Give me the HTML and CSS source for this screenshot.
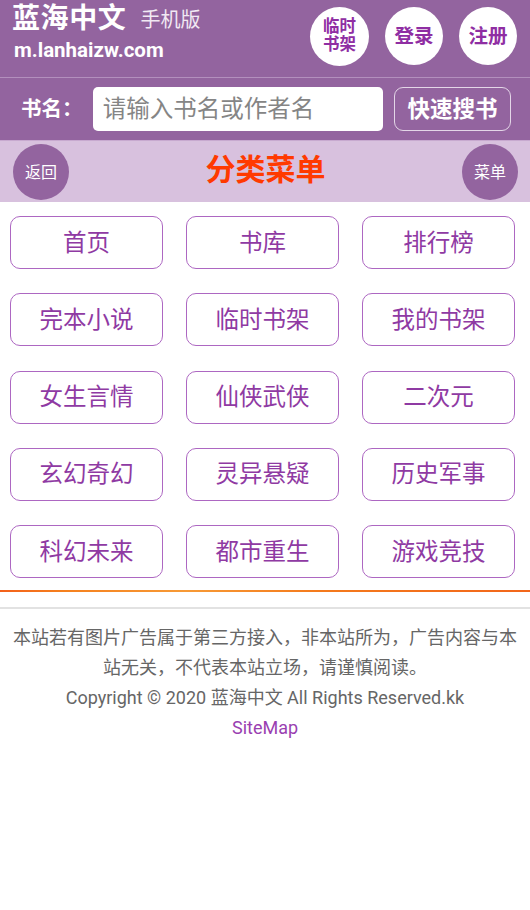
FILE: index.html
```html
<!DOCTYPE html>
<html lang="zh-CN">
<head>
<meta charset="utf-8">
<title>分类菜单 - 蓝海中文</title>
<link rel="stylesheet" href="styles.css">
</head>
<body>
<header class="top">
  <div class="brand">
    <div class="logo-line"><span class="logo">蓝海中文</span><span class="sub">手机版</span></div>
    <div class="domain">m.lanhaizw.com</div>
  </div>
  <nav class="user">
    <a class="circle small">临时<br>书架</a>
    <a class="circle">登录</a>
    <a class="circle">注册</a>
  </nav>
</header>
<form class="search">
  <label class="search-label">书名：</label>
  <input class="search-input" type="text" placeholder="请输入书名或作者名">
  <button class="search-btn" type="button">快速搜书</button>
</form>
<div class="catbar">
  <a class="round">返回</a>
  <h1 class="cat-title">分类菜单</h1>
  <a class="round">菜单</a>
</div>
<div class="grid">
  <a class="item">首页</a>
  <a class="item">书库</a>
  <a class="item">排行榜</a>
  <a class="item">完本小说</a>
  <a class="item">临时书架</a>
  <a class="item">我的书架</a>
  <a class="item">女生言情</a>
  <a class="item">仙侠武侠</a>
  <a class="item">二次元</a>
  <a class="item">玄幻奇幻</a>
  <a class="item">灵异悬疑</a>
  <a class="item">历史军事</a>
  <a class="item">科幻未来</a>
  <a class="item">都市重生</a>
  <a class="item">游戏竞技</a>
</div>
<div class="ad-line"></div>
<footer class="foot">
  <p>本站若有图片广告属于第三方接入，非本站所为，广告内容与本站无关，不代表本站立场，请谨慎阅读。</p>
  <p>Copyright © 2020 蓝海中文 All Rights Reserved.kk</p>
  <p><a class="sitemap">SiteMap</a></p>
</footer>
</body>
</html>
```
FILE: styles.css
```css
* { box-sizing: border-box; }
html, body { margin: 0; padding: 0; background: #fff; }
body {
  font-family: Roboto, "Noto Sans CJK SC", "Noto Sans", sans-serif;
  color: #333;
}
a { text-decoration: none; }

.top {
  height: 78px;
  background: #93649f;
  border-bottom: 1px solid #b38fbd;
  display: flex;
  justify-content: space-between;
  padding: 0 13px 0 12px;
  color: #fff;
}
.brand { display: flex; flex-direction: column; }
.logo-line { height: 37px; display: flex; align-items: center; }
.logo {
  font-size: 28px;
  font-weight: bold;
  line-height: 34px;
  letter-spacing: 0.6px;
}
.sub {
  font-size: 20px;
  margin-left: 14px;
  color: #f1e9f3;
  line-height: 34px;
  padding-top: 2px;
}
.domain {
  font-size: 20.5px;
  font-weight: bold;
  line-height: 26px;
  margin-left: 2px;
}
.user { display: flex; gap: 16px; padding-top: 7px; }
.circle {
  width: 58px;
  height: 58px;
  border-radius: 50%;
  background: #fff;
  color: #8f2ea3;
  font-weight: bold;
  font-size: 19.5px;
  display: flex;
  align-items: center;
  justify-content: center;
  text-align: center;
  padding-bottom: 3px;
}
.circle.small { font-size: 16.5px; line-height: 18px; width: 59px; height: 59px; padding-bottom: 2px; }

.search {
  margin: 0;
  height: 62px;
  background: #93649f;
  display: flex;
  align-items: center;
  padding: 0 19px 0 21px;
}
.search-label {
  color: #fff;
  font-size: 20.5px;
  font-weight: bold;
  width: 72px;
  padding-bottom: 4px;
}
.search-input {
  width: 291px;
  height: 44px;
  border: none;
  border-radius: 5px;
  padding: 0 10px 4px;
  font-family: "Noto Sans CJK SC", sans-serif;
  font-size: 23.5px;
  color: #333;
  outline: none;
}
.search-input::placeholder { color: #858585; }
.search-btn {
  margin-left: 11px;
  width: 117px;
  height: 44px;
  background: transparent;
  border: 1px solid #e3d6e7;
  border-radius: 9px;
  color: #fff;
  font-family: "Noto Sans CJK SC", sans-serif;
  font-size: 22.5px;
  font-weight: bold;
  padding: 0 0 4px;
}

.catbar {
  height: 62px;
  background: #d8c1de;
  display: flex;
  align-items: center;
  justify-content: space-between;
  padding: 0 12px 0 13px;
  border-top: 1px solid #c7a9cf;
}
.round {
  width: 56px;
  height: 56px;
  border-radius: 50%;
  background: #93649f;
  color: #fff;
  font-size: 16px;
  display: flex;
  align-items: center;
  justify-content: center;
  padding-bottom: 2px;
}
.cat-title {
  margin: 0;
  font-size: 30px;
  font-weight: bold;
  color: #ff3a00;
  line-height: 40px;
  padding-bottom: 3px;
}

.grid {
  display: grid;
  grid-template-columns: repeat(3, 153px);
  column-gap: 23px;
  row-gap: 24.3px;
  padding: 14px 0 0 10px;
}
.item {
  height: 53px;
  border: 1px solid #ad67c2;
  border-radius: 10px;
  display: flex;
  align-items: center;
  justify-content: center;
  font-size: 23.5px;
  color: #8f3aa3;
  padding-bottom: 4px;
}

.ad-line {
  margin-top: 12px;
  height: 2px;
  background: linear-gradient(90deg, #f3601a 0%, #f5801e 12%, #f79a36 35%, #f47a1c 60%, #f2661a 100%);
}

.foot {
  margin-top: 15px;
  border-top: 2px solid #e2e2e2;
  padding: 14px 8px 0;
  text-align: center;
  color: #666;
  font-size: 18px;
  line-height: 30px;
}
.foot p { margin: 0; }
.sitemap { color: #9a3fb1; }
```
